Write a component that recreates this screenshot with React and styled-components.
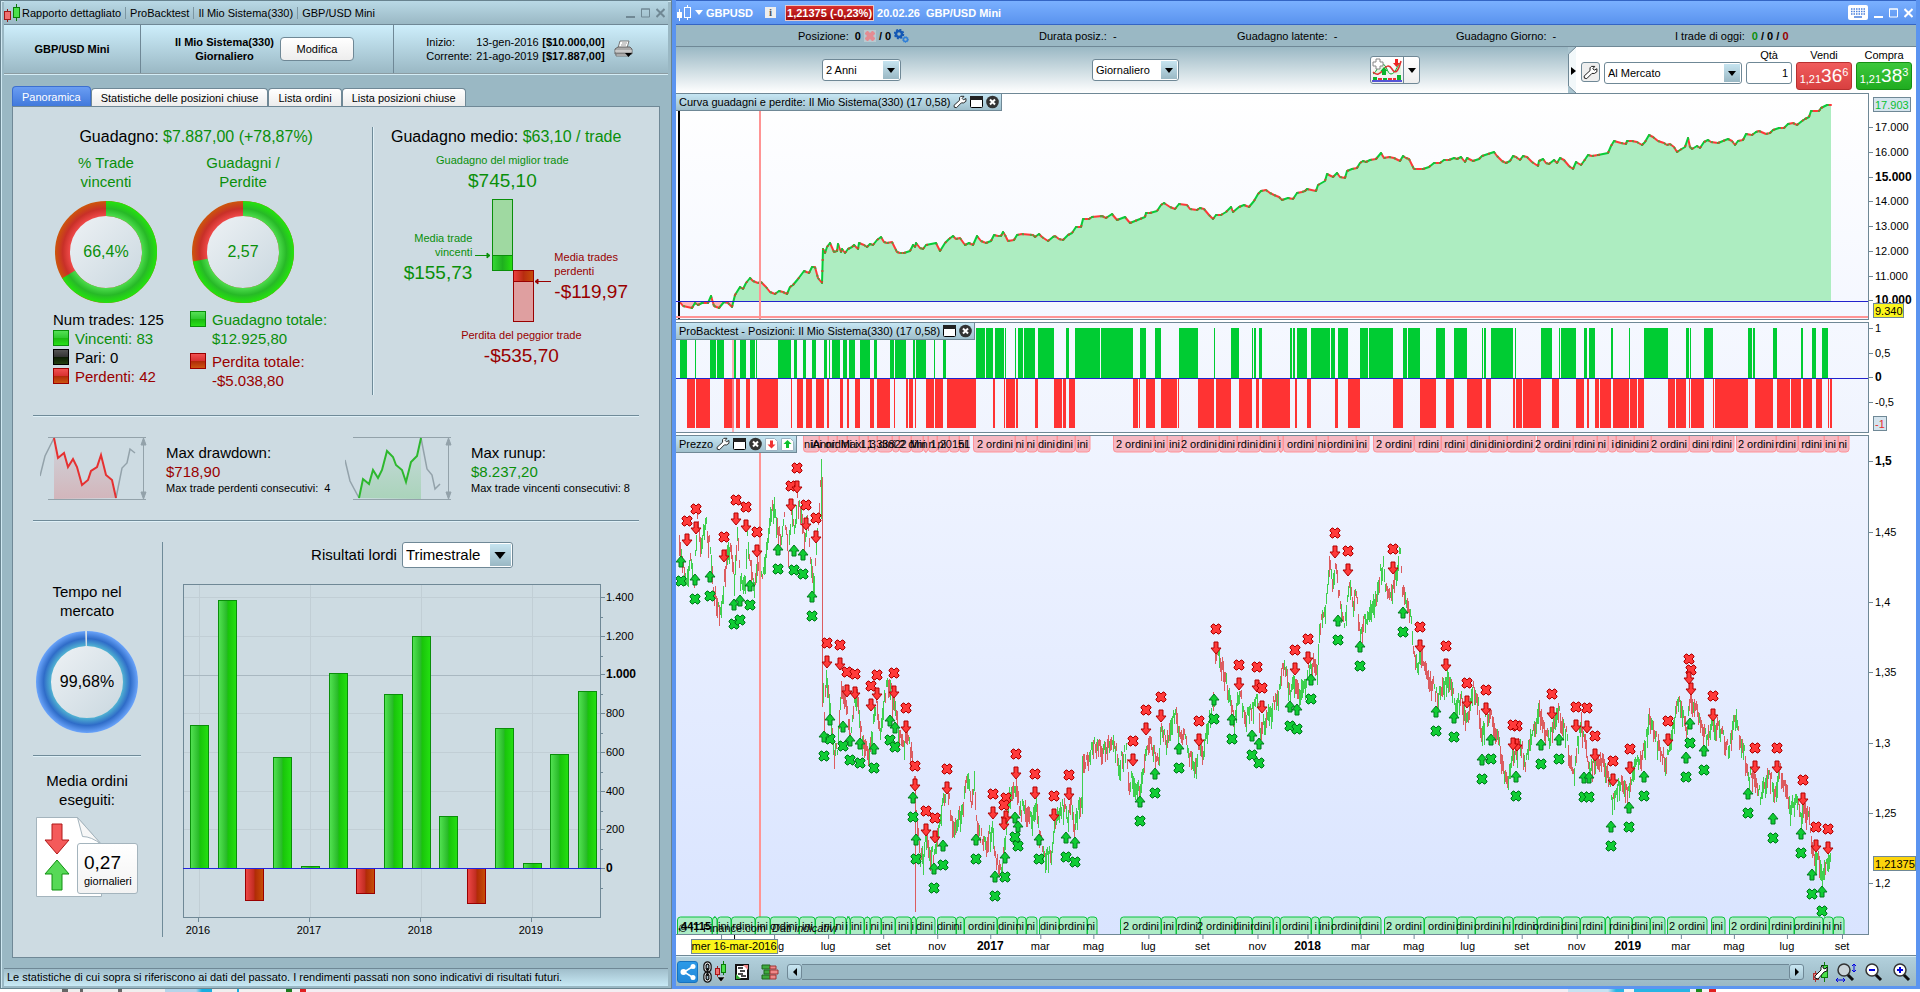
import React, { useState } from 'react';
import styled, { createGlobalStyle } from 'styled-components';

const GlobalStyle = createGlobalStyle`
  * { box-sizing: border-box; }
  body {
    margin: 0;
    background: #f4f4f4;
    color: #000;
    font: 11px/14px "Liberation Sans", Arial, sans-serif;
  }
  button, input, select { font: inherit; color: inherit; }
  svg { display: block; }
  svg text { font-family: "Liberation Sans", Arial, sans-serif; }
`;

const GREEN = '#0a8f0a';
const RED = '#990000';
const LINE = '#6f8896';

/* ---------- chart data ---------- */

// every series is sampled in two blocks, each with its own horizontal scale
const scale = (perPx, start) => (u) => Math.round(u / perPx + start);
const early = scale(2.45, -6);
const late = scale(2.45, 604);
const place = (fn, list) => list.map(([u, ...rest]) => [fn(u), ...rest]);
const placeRange = (fn, list) => list.map(([a, b, ...rest]) => [fn(a), fn(b), ...rest]);

const pairs = (text) => text.trim().split(/\s+/).map((p) => p.split(',').map(Number));

const EQUITY = [
  ...place(scale(2.613, -6), pairs(`
    24,634 34,648 58,655 66,638 72,645 84,640 98,640 108,618 116,648 128,655 140,636 152,638 162,650 170,614 182,592 190,598
    198,578 208,565 216,574 230,580 238,576 250,590 262,606 274,612 284,602 294,606 306,612 314,590 322,586 334,566 350,544
    362,548 370,530 380,530 388,564 396,578 400,478 404,490 410,470 418,458 428,487 436,484 440,462 446,486 450,478 456,488
    464,476 476,472 482,466 490,478 494,458 506,464 514,472 522,462 530,466 540,450 552,441 560,456 568,460 580,456 592,486
    600,488 612,490 628,484 636,464 640,472 644,458 652,475 660,476 670,464 696,460 706,482 718,460 730,446 740,438 748,446
    758,444 770,466 782,458 792,464 802,438 812,452 826,458 838,454 846,434 856,438 866,438 870,427 876,436 884,452 900,450
    908,434 920,432 948,434 954,442 964,432 972,440 988,452 1000,440 1006,438 1016,448 1028,450 1040,436 1050,428 1062,410
    1074,410 1080,388 1094,386 1102,380 1130,378 1138,385 1154,373 1168,390 1190,382 1202,398 1214,392 1228,388 1240,382
    1244,370 1254,370 1272,364 1282,344 1292,338 1306,350 1320,356 1330,342 1350,346 1360,356 1376,360 1384,354 1396,356
    1408,374 1420,388 1426,374 1440,376 1454,366 1466,352 1472,366 1488,352 1500,346 1512,350 1526,334 1536,312 1544,302
    1558,300`)),
  ...place(scale(2.412, 594), pairs(`
    0,308 10,316 22,320 30,330 44,324 56,326 64,308 76,306 84,304 90,296 110,302 116,286 132,274 138,252 152,260 162,248
    170,260 180,265 186,244 198,236 210,234 216,218 224,212 232,216 240,209 256,206 268,190 276,204 288,200 300,204 314,214
    320,198 328,204 336,208 348,236 370,238 384,232 396,220 410,218 420,211 432,209 444,203 450,207 460,200 470,215 476,203
    490,212 504,206 512,198 526,192 540,187 548,198 560,212 570,218 578,214 586,199 594,200 602,210 610,198 620,202 632,215
    646,228 650,214 658,206 666,218 674,222 684,210 692,218 700,204 708,210 722,228 732,236 738,216 750,224 758,214 766,194
    776,198 790,194 816,190 822,168 830,154 846,160 858,162 862,152 872,152 884,156 898,166 904,156 914,136 924,142 936,154
    950,158 958,164 964,162 974,172 982,186 990,180 1002,172 1008,144 1012,172 1018,178 1030,168 1036,174 1046,156 1056,150
    1064,157 1080,158 1092,154 1104,146 1114,152 1122,166 1130,154 1140,150 1148,132 1162,136 1172,126 1180,124 1196,132
    1206,130 1214,120 1228,114 1240,114 1250,102 1262,98 1272,104 1282,92 1290,88 1300,80 1306,64 1324,64 1330,54 1344,46
    1354,45`)),
].map(([x, y]) => [x, Math.round(y / 3) - 4]);

const LONGS = [
  ...placeRange(early, pairs(`
    24,42 61,64 98,113 115,132 158,162 171,186 196,208 211,213 265,296 304,311 326,333 348,358 377,385 389,393 397,416
    424,433 438,453 465,491 500,507 539,549 551,578 595,600 603,627 647,649 669,676 750,772 774,791 796,818 821,823 845,848
    853,865 867,894 902,941 970,978 992,1053 1056,1134 1151,1166 1188,1203 1247,1294 1332,1334 1374,1393 1426,1429
    1431,1436 1443,1450 1519,1524 1526,1531 1536,1561`)),
  ...placeRange(late, pairs(`
    76,122 125,135 142,167 196,216 218,277 301,311 314,343 382,404 426,458 495,497 500,505 517,571 575,577 639,666 684,686
    688,725 745,752 757,772 811,816 855,857 892,951 995,1002 1004,1007 1039,1061 1147,1156 1159,1164 1208,1218 1276,1281
    1303,1313 1328,1343`)),
];

const SHORTS = [
  ...placeRange(early, pairs(`
    42,61 64,98 132,158 162,171 186,196 213,265 296,300 311,326 333,348 358,377 385,389 416,424 433,438 453,465 491,500
    507,539 549,551 578,583 586,595 600,603 627,647 649,669 679,750 791,796 818,821 823,845 848,853 894,902 941,960 963,970
    978,992 1134,1147 1149,1151 1166,1188 1203,1242 1245,1247 1294,1332 1338,1374 1394,1426 1436,1443 1450,1519 1531,1536`)),
  ...placeRange(late, pairs(`
    66,76 135,142 167,196 277,301 343,382 407,426 458,495 505,517 571,576 578,593 595,639 666,684 725,745 752,757 772,782
    784,811 816,855 857,875 877,892 951,968 970,995 1002,1004 1007,1039 1061,1063 1066,1147 1164,1208 1218,1250 1252,1276
    1281,1303 1313,1328 1343,1345 1347,1352`)),
];

const upper = ([x, y]) => [x, Math.round(y / 3) - 136];
const lower = ([x, y]) => [x, Math.round(y / 3) + 184];

const SELLS = [
  ...place(early, pairs('42,664 64,627 162,601 187,622 133,712 213,697 297,559 312,505 334,616 358,653')).map(upper),
  ...place(early, pairs(`
    385,70 417,76 434,157 454,163 493,199 508,165 549,160 579,265 600,438 679,448 628,574 650,595 792,523 823,535 819,556
    848,402 895,463 942,529 978,466 1135,363 1167,271 1204,232 1295,304 1338,27 1395,136 1437,142 1451,205 1532,91
    1562,58`)).map(lower),
  ...place(late, pairs('135,700 167,754 278,748')).map(upper),
  ...place(late, pairs(`
    344,22 407,79 459,190 505,211 580,318 572,315 667,223 726,262 752,265 772,349 817,424 858,388 951,304 1008,151 1003,118
    1061,229 1164,385 1218,385 1282,481 1314,622 1343,628`)).map(lower),
];

const BUYS = [
  ...place(early, pairs('26,786 62,841 98,832 157,916 172,904 197,859 265,751 304,754 327,766 349,892')).map(upper),
  ...place(early, pairs(`
    391,299 378,352 425,322 440,362 466,373 501,388 540,302 552,325 596,535 603,661 647,748 670,677 750,661 797,772 821,715
    846,595 853,622 903,661 971,655 993,670 1152,547 1189,463 1248,388 1334,241 1376,301 1427,349 1444,373 1520,262
    1537,271`)).map(lower),
  ...place(late, pairs('143,964 302,940')).map(upper),
  ...place(late, pairs(`
    77,181 197,82 383,276 427,295 496,421 517,361 577,472 640,376 684,361 745,475 758,475 811,622 856,565 893,472 995,415
    1005,313 1040,394 1147,523 1209,598 1277,643 1304,766 1328,817`)).map(lower),
];

const PRICE = [
  ...place(early, pairs(`
    22,538 30,565 40,590 48,560 58,585 66,520 75,550 85,525 95,545 105,590 115,605 123,620 130,590 138,560 148,550 156,580
    164,535 172,585 184,580 188,545 198,570 205,590 214,560 222,585 230,570 245,520 256,508 264,535 272,545 280,525 288,555
    296,515 304,535 312,505 320,518 328,545 336,520 344,560 354,590 358,550 364,510 371,470 374,690 378,715 383,675 390,700
    400,755 410,755 418,690 426,700 434,715 440,740 450,705 458,700 468,740 486,760 495,735 505,705 515,735 525,700 533,685
    543,700 552,705 560,740 570,750 580,735 590,755 597,780 603,820 612,860 620,860 626,840 635,850 645,862 655,840 665,810
    678,790 686,815 695,835 705,820 715,815 722,785 730,785 738,805 745,785 750,825 760,840 772,850 780,840 790,830 797,860
    803,870 811,880 820,840 830,800 840,795 848,790 858,815 870,808 880,820 890,818 896,805 905,835 915,855 925,860 935,855
    942,830 950,815 965,808 972,825 980,805 990,830 1000,810 1010,805 1012,765 1025,765 1035,750 1050,752 1065,755 1078,742
    1090,750 1098,770 1108,762 1118,755 1125,790 1135,780 1145,795 1155,785 1170,745 1182,750 1195,765 1203,728 1215,745
    1228,730 1240,712 1248,740 1262,740 1270,760 1286,770 1295,745 1305,755 1315,730 1325,715 1332,700 1336,655 1344,660
    1352,670 1360,680 1370,700 1382,730 1390,705 1396,700 1410,720 1425,715 1437,705 1445,735 1460,720 1475,710 1490,700
    1500,668 1510,675 1520,695 1530,685 1540,695 1555,690 1560,675`)),
  ...place(late, pairs(`
    80,665 90,670 95,635 100,625 110,615 119,565 128,590 137,570 143,595 152,620 158,628 168,590 178,605 187,600 196,635
    206,625 215,620 225,605 235,600 245,575 252,570 258,595 268,600 275,590 285,575 294,555 300,590 308,605 318,615 326,650
    335,670 345,660 355,670 370,685 386,702 398,690 408,680 420,690 430,710 443,700 455,725 465,705 474,695 485,710 495,740
    505,715 520,725 535,740 548,775 556,785 565,765 572,755 580,755 588,745 600,765 610,745 622,730 634,710 645,730 660,745
    668,725 682,712 690,730 700,740 710,765 720,775 730,740 738,725 748,745 758,775 770,765 785,765 800,770 810,805 816,800
    825,790 840,785 852,795 862,780 872,765 885,760 895,750 905,715 915,730 930,755 945,765 958,740 966,725 975,700 985,715
    997,735 1003,705 1015,710 1030,720 1042,740 1052,735 1062,730 1075,730 1088,745 1098,755 1108,730 1116,720 1125,740
    1135,750 1148,785 1157,775 1164,782 1175,800 1190,780 1203,785 1212,800 1222,775 1235,785 1250,810 1265,805 1275,820
    1284,808 1295,820 1302,845 1310,865 1318,860 1328,875 1340,868 1350,860`)),
].map(([x, y]) => [x, y - 436]);

// one thin high/low bar per session between the turning points
const buildBars = (points) => {
  let seed = 7;
  const rand = () => {
    seed = (seed * 16807) % 2147483647;
    return seed / 2147483647;
  };
  const bars = { up: '', down: '' };
  for (let i = 1; i < points.length; i += 1) {
    const [x0, y0] = points[i - 1];
    const [x1, y1] = points[i];
    for (let x = x0; x < x1; x += 1) {
      const y = y0 + ((y1 - y0) * (x - x0)) / (x1 - x0);
      const top = Math.round(y - 3 - rand() * 11);
      const size = Math.round(5 + rand() * 17);
      const rising = y1 < y0 ? rand() > 0.22 : rand() > 0.72;
      bars[rising ? 'up' : 'down'] += `M${x + 0.5} ${top}v${size}`;
    }
  }
  return bars;
};
const BARS = buildBars(PRICE);

const tags = (fn, text) =>
  text.trim().split('|').map((t) => {
    const [a, b, n = ''] = t.trim().split(',');
    return [fn(Number(a)), fn(Number(b)), n];
  });

const SELL_TAGS = [
  ...tags(early, `
    326,364,|364,388,|388,410,|410,433,|433,463,|463,486,|486,508,|508,545,|545,561,|561,590,|590,620,|620,633,|633,655,|
    655,683,|683,707,|707,733,ni|743,845,2 ordini|845,871,ni|871,900,ni|900,947,dini|947,993,dini|
    993,1030,ini|1086,1186,2 ordini|1186,1218,ini|1218,1255,ini|1255,1345,2 ordini|1345,1390,dini|1390,1446,rdini|
    1446,1490,dini|1490,1502,i|1502,1583,ordini`),
  ...tags(late, `
    89,118,ni|118,187,ordini|187,218,ini|229,329,2 ordini|329,395,rdini|395,459,rdini|459,511,dini|511,557,dini|
    557,624,ordini|630,718,2 ordini|718,777,rdini|777,804,ni|804,823,i|823,868,dini|868,910,dini|910,1003,2 ordini|
    1003,1055,dini|1058,1112,rdini|1116,1216,2 ordini|1216,1270,rdini|1270,1333,rdini|1333,1367,ini|1367,1395,ni`),
];

const BUY_TAGS = [
  ...tags(early, `
    17,102,|102,114,|114,150,ini|150,209,rdini|209,245,ini|245,316,ordini|316,355,ini|355,402,ini|402,430,ni|430,442,i|
    442,476,ini|476,490,i|490,518,ni|518,551,ini|551,591,ini|591,603,i|603,649,dini|654,700,dini|700,721,ni|721,802,ordini|
    802,849,dini|849,873,ni|873,898,ni|905,953,dini|953,1022,ordini|1022,1045,ni|1103,1204,2 ordini|1204,1240,ini|
    1240,1299,rdini|1299,1385,2 ordini|1385,1427,dini|1427,1478,rdini|1478,1495,i|1495,1571,ordini`),
  ...tags(late, `
    77,95,i|95,127,ini|127,195,ordini|195,248,rdini|254,353,2 ordini|353,434,ordini|434,478,dini|478,546,ordini|546,570,ni|
    570,629,rdini|629,692,ordini|692,736,dini|736,797,rdini|797,809,|809,863,rdini|863,907,dini|907,944,ini|
    948,1047,2 ordini|1055,1091,ini|1099,1199,2 ordini|1199,1260,rdini|1260,1330,ordini|1330,1355,ni|1355,1381,ni`),
];

const MONTHS = [
  ...place(early, [
    [125, ''], [256, ''], [388, 'lug'], [523, 'set'], [653, 'nov'], [783, '2017'], [907, 'mar'], [1037, 'mag'],
    [1172, 'lug'], [1304, 'set'], [1437, 'nov'],
  ]),
  ...place(late, [
    [67, '2018'], [195, 'mar'], [327, 'mag'], [457, 'lug'], [591, 'set'], [724, 'nov'], [851, '2019'], [979, 'mar'],
    [1109, 'mag'], [1239, 'lug'], [1374, 'set'],
  ]),
];

// x, top, bottom of each quarter
const QUARTERS = [
  [7, 142, 285], [35, 17, 285], [62, 285, 317], [90, 174, 285], [118, 283, 285], [146, 90, 285], [173, 285, 310],
  [201, 111, 285], [229, 53, 285], [256, 233, 285], [284, 285, 320], [312, 145, 285], [340, 280, 285], [367, 171, 285],
  [395, 108, 285],
];

/* ---------- icons ---------- */

const CandlesIcon = () => (
  <svg width="16" height="20" viewBox="0 0 16 20">
    <path d="M3.500 6v13" stroke="#8c1a1a" />
    <rect x="0.500" y="8.500" width="6" height="8" fill="#f07070" stroke="#a01818" />
    <path d="M12.500 1v17" stroke="#0b7a0b" />
    <rect x="9.500" y="4.500" width="6" height="10" fill="#4be04b" stroke="#0b7a0b" />
  </svg>
);

const WhiteCandlesIcon = () => (
  <svg width="16" height="18" viewBox="0 0 16 18">
    <path d="M3.500 5v12M11.500 1v15" stroke="#fff" />
    <rect x="1" y="8" width="5" height="6" fill="#fff" />
    <rect x="8.500" y="3.500" width="6" height="10" fill="#6ba2f6" stroke="#fff" />
  </svg>
);

const WrenchIcon = ({ size = 14 }) => (
  <svg width={size} height={size} viewBox="0 0 16 16">
    <path
      d="M9 1.500h3.500l-2 2.500 1.500 1.500 2.800-1.500v3.200l-2.600 1.800H9.500L4 14.500 1.500 14 1.200 11.800 7.500 6V3z"
      fill="#fff" stroke="#111" strokeLinejoin="round"
    />
  </svg>
);

const PaneIcon = () => (
  <svg width="13" height="14" viewBox="0 0 13 14">
    <rect x="0.500" y="1.500" width="12" height="11" rx="1" fill="#fff" stroke="#000" />
    <path d="M0 1h13v4H0z" fill="#222" />
  </svg>
);

const CloseIcon = () => (
  <svg width="13" height="14" viewBox="0 0 13 14">
    <circle cx="6.500" cy="7" r="6.300" fill="#333" />
    <path d="M4 4.500l5 5M9 4.500l-5 5" stroke="#fff" strokeWidth="2" />
  </svg>
);

const OrderIcon = ({ up }) => (
  <svg width="13" height="14" viewBox="0 0 13 14">
    <path d="M0.500 1.500h9l3 3v9h-12z" fill="#fff" stroke="#9db4c4" />
    {up
      ? <path d="M6.500 3l4 4H8v4H5V7H2.500z" fill="#0cc22c" />
      : <path d="M6.500 11.500l4-4H8v-4H5v4H2.500z" fill="#f03434" />}
  </svg>
);

const PrinterIcon = () => (
  <svg width="19" height="18" viewBox="0 0 19 18">
    <path d="M6 1h9l-2 7H4z" fill="#fff" stroke="#777" />
    <path d="M8 3h5M7 5h5" stroke="#999" />
    <path d="M1 9l3-2h12l2 2v5H1z" fill="#a9a9a9" stroke="#666" />
    <path d="M1 11h17" stroke="#e8e8e8" />
    <path d="M2 14h13v2H2z" fill="#ddd" stroke="#777" />
    <path d="M11 13h7l-3.500 4z" fill="#000" />
  </svg>
);

const GearsIcon = () => (
  <svg width="15" height="14" viewBox="0 0 15 14">
    <circle cx="5" cy="5" r="3" fill="none" stroke="#1559b5" strokeWidth="2.500" />
    <circle cx="5" cy="5" r="4.500" fill="none" stroke="#1559b5" strokeWidth="1.500" strokeDasharray="2 1.500" />
    <circle cx="11.500" cy="10.500" r="2" fill="none" stroke="#2f7fd8" strokeWidth="1.500" />
    <circle cx="11.500" cy="10.500" r="3" fill="none" stroke="#2f7fd8" strokeDasharray="1 1" />
  </svg>
);

const KeyboardIcon = () => (
  <svg width="20" height="15" viewBox="0 0 20 15">
    <rect width="20" height="15" rx="2" fill="#fff" />
    <path d="M3 4h14M3 6.500h14M3 9h14" stroke="#4a80dc" strokeWidth="1.500" strokeDasharray="1.500 1" />
    <path d="M6 12h8" stroke="#4a80dc" strokeWidth="1.500" />
  </svg>
);

const IndicatorIcon = () => (
  <svg width="32" height="24" viewBox="0 0 32 24">
    <path d="M2 16c4-2 5-10 9-10s5 10 9 10 5-12 10-12v12z" fill="#dff5df" />
    <path d="M2 16c4-2 5-10 9-10 5 0 5 10 9 10s6-8 10-12" fill="none" stroke="#0aa82a" />
    <path d="M2 14c4 4 7 2 10-2s6-6 9-1 6 4 9-8" fill="none" stroke="#e03030" strokeWidth="1.500" />
    <path d="M5 1h4v3h3v4H9v3H5V8H2V4h3z" fill="#fff" stroke="#888" />
    <path d="M24 1h3v4h2l-3.500 4L22 5h2z" fill="#ee2222" />
    <path d="M13 9l3.500 4H15v4h-4v-4H9.500z" fill="#0cb52c" />
    <path d="M2 19h4v3H2zM12 20h4v2h-4zM26 17h4v5h-4z" fill="#0cb52c" />
    <path d="M7 20h4v2H7zM17 20h4v2h-4zM22 20h3v2h-3z" fill="#e33" />
    <path d="M1 23h30" stroke="#2222cc" strokeWidth="1.500" />
  </svg>
);

const ShareIcon = () => (
  <svg width="16" height="18" viewBox="0 0 16 18">
    <path d="M13 3.500L4 9l9 5.500" fill="none" stroke="#fff" strokeWidth="1.500" />
    <circle cx="13" cy="3.500" r="2.500" fill="#fff" />
    <circle cx="3.500" cy="9" r="3" fill="#fff" />
    <circle cx="13" cy="14.500" r="2.500" fill="#fff" />
  </svg>
);

const ChainIcon = () => (
  <svg width="24" height="22" viewBox="0 0 24 22">
    <g fill="none" stroke="#111" strokeWidth="3.500">
      <rect x="2" y="2" width="5" height="8" rx="2.500" />
      <rect x="2" y="12" width="5" height="8" rx="2.500" />
    </g>
    <g fill="none" stroke="#fff">
      <rect x="2" y="2" width="5" height="8" rx="2.500" />
      <rect x="2" y="12" width="5" height="8" rx="2.500" />
    </g>
    <path d="M4.500 7v8" stroke="#111" strokeWidth="2" />
    <path d="M14.500 5v11" stroke="#a01818" />
    <rect x="12.500" y="7.500" width="4" height="6" fill="#f07070" stroke="#a01818" />
    <path d="M20.500 0v14" stroke="#0b7a0b" />
    <rect x="18.500" y="3.500" width="4" height="8" fill="#4be04b" stroke="#0b7a0b" />
    <path d="M14 16h8l-4 5z" fill="#000" stroke="#fff" strokeWidth="0.500" />
  </svg>
);

const NotesIcon = () => (
  <svg width="14" height="16" viewBox="0 0 14 16">
    <rect x="1" y="1" width="12" height="14" fill="#fff" stroke="#111" strokeWidth="2" />
    <path d="M3 4h5M5 7h5M3 10h5M6 12h5" stroke="#111" strokeWidth="1.500" />
    <path d="M8 1h5v5z" fill="#e88" />
    <path d="M1 10l5 5H1z" fill="#3a3" />
  </svg>
);

const DepthIcon = () => (
  <svg width="18" height="16" viewBox="0 0 18 16">
    <path d="M1 1h8v4H1zM3 6h6v4H3zM1 11h8v4H1z" fill="#3faa3f" stroke="#1c661c" />
    <path d="M9 2h6v3H9zM9 6h8v4H9zM9 11h6v4H9z" fill="#f08888" stroke="#9c3434" />
  </svg>
);

const ChartToolsIcon = () => (
  <svg width="16" height="20" viewBox="0 0 16 20">
    <path d="M3.500 9v11" stroke="#a33" />
    <rect x="1.500" y="11.500" width="5" height="6" fill="#e77" stroke="#a33" />
    <path d="M12.500 0v20" stroke="#0b7a0b" />
    <rect x="9.500" y="3.500" width="6" height="12" fill="#4be04b" stroke="#0b7a0b" />
    <path d="M9 5l2-2v3l2 1 2-2v4l-3 1-6 7-3-1 0-2 6-6z" fill="#fff" stroke="#111" />
  </svg>
);

const MagnifierIcon = ({ sign }) => (
  <svg width="20" height="20" viewBox="0 0 20 20">
    <path d="M11 12l6 6" stroke="#111" strokeWidth="3" />
    <circle cx="8" cy="8" r="6" fill={sign ? '#fff' : '#c9d3d8'} stroke="#333" strokeWidth="1.500" />
    {sign && <path d={sign === '+' ? 'M5 8h6M8 5v6' : 'M5 8h6'} stroke="#0000e0" strokeWidth="2" />}
    {!sign && (
      <path d="M18 2v8M16 4l2-2 2 2M16 8l2 2 2-2M0 18h9M2 16l-2 2 2 2M7 16l2 2-2 2" stroke="#0000e0" fill="none" />
    )}
  </svg>
);

/* ---------- shared parts ---------- */

const Desktop = styled.main`
  min-height: 100vh;
  display: flex;
  flex-direction: column;
`;

const Windows = styled.div`
  flex: 1;
  display: grid;
  grid-template-columns: 35% 1fr;
`;

const BackWindow = styled.div`
  height: 3px;
  background: linear-gradient(
    90deg, #fff 50px, #efefef 50px 62px, #666 62px 68px, #efefef 68px 80px, #666 80px 83px, #efefef 83px 118px,
    #666 118px 122px, #efefef 122px 165px, #b5d5ea 165px 196px, #19aee0 202px 212px, #efefef 212px 237px,
    #19aee0 237px 239px, #f2f2f2 239px 286px, #1d7a1d 286px 292px, #f2f2f2 292px 300px, #e02020 300px 306px,
    #f3eef3 306px 1568px, #c6e2f2 1568px 1608px, #28b4e4 1616px 1624px, #f4f4f4 1624px 1634px, #28b4e4 1634px 1690px,
    #f4f4f4 1690px 1696px, #1d8a1d 1696px 1702px, #f4f4f4 1702px 1709px, #e02020 1709px 1716px, #fff 1716px
  );
`;

const WindowControls = styled.div`
  margin-left: auto;
  display: flex;
  align-items: center;
  gap: 6px;
`;

const IconButton = styled.button`
  display: grid;
  place-items: center;
  padding: 0;
  border: 0;
  background: none;
`;

const Controls = ({ color }) => (
  <>
    <IconButton aria-label="Riduci">
      <svg width="9" height="10" viewBox="0 0 9 10"><path d="M0 9h9" stroke={color} strokeWidth="2" /></svg>
    </IconButton>
    <IconButton aria-label="Ingrandisci">
      <svg width="9" height="10" viewBox="0 0 9 10"><path d="M0.500 1h8v8h-8zM0 1h9" fill="none" stroke={color} /></svg>
    </IconButton>
    <IconButton aria-label="Chiudi">
      <svg width="9" height="10" viewBox="0 0 9 10"><path d="M0.500 1l8 8M8.500 1l-8 8" stroke={color} strokeWidth="2" /></svg>
    </IconButton>
  </>
);

const SelectBox = styled.div`
  position: relative;
  width: ${(p) => p.$width};
`;

const NativeSelect = styled.select`
  appearance: none;
  display: block;
  width: 100%;
  height: ${(p) => (p.$large ? 26 : 22)}px;
  padding: 0 0 0 3px;
  border: 1px solid ${LINE};
  border-radius: 3px;
  background: #fff;
  font-size: ${(p) => (p.$large ? 15 : 11)}px;
`;

const SelectArrow = styled.span`
  position: absolute;
  top: 2px;
  right: 2px;
  bottom: 2px;
  width: ${(p) => (p.$large ? 21 : 16)}px;
  display: grid;
  place-items: center;
  background: linear-gradient(#c6e4f0, #9ab8c4);
  pointer-events: none;
`;

const Select = ({ large, width, label, id, options }) => {
  const [value, setValue] = useState(options[0]);
  return (
    <SelectBox $width={width}>
      <NativeSelect id={id} aria-label={label} $large={large} value={value} onChange={(e) => setValue(e.target.value)}>
        {options.map((o) => <option key={o}>{o}</option>)}
      </NativeSelect>
      <SelectArrow $large={large}>
        <svg width={large ? 12 : 8} height={large ? 7 : 5} viewBox="0 0 8 5"><path d="M0 0h8L4 5z" /></svg>
      </SelectArrow>
    </SelectBox>
  );
};

/* ---------- report window ---------- */

const Report = styled.section`
  display: flex;
  flex-direction: column;
  min-width: 0;
  padding: 0 3px 2px;
  border: 1px solid #68838f;
  background: #9ab8c4;
  box-shadow: inset 1px 1px #cfe8f2;
`;

const ReportTitle = styled.header`
  display: flex;
  align-items: center;
  height: 24px;
  padding-right: 3px;
  border-bottom: 1px solid ${LINE};
  background: linear-gradient(#b9d9e6, #9ab8c4);

  span { padding: 0 4px; border-left: 1px solid #7c96a2; line-height: 12px; }
  span:first-of-type { padding-left: 2px; border: 0; }
`;

const Summary = styled.div`
  display: grid;
  grid-template-columns: 136fr 253fr 275fr;
  height: 50px;
  border-bottom: 2px groove #d5edf6;
  background: linear-gradient(#cdeefb, #9ab8c4);
`;

const SummaryCell = styled.div`
  display: flex;
  align-items: center;
  justify-content: center;
  gap: 6px;
  padding-right: ${(p) => p.$shift || 0}px;
  text-align: center;
  font-weight: ${(p) => (p.$plain ? 400 : 700)};
  & + & { border-left: 1px solid ${LINE}; }
`;

const Modify = styled.button`
  height: 24px;
  width: 74px;
  border: 1px solid ${LINE};
  border-radius: 4px;
  background: linear-gradient(#fff, #ededed);
  font-weight: 400;
`;

const Dates = styled.dl`
  display: grid;
  grid-template-columns: 50px 63px auto;
  margin: 0 3px 0 0;
  text-align: left;
  dt, dd { margin: 0; white-space: nowrap; }
`;

const Tabs = styled.div`
  display: flex;
  align-items: flex-end;
  height: 20px;
  margin: 11px 8px 0;
`;

const Tab = styled.button`
  height: ${(p) => (p.$active ? 20 : 18)}px;
  padding: 0 9px;
  border: 1px solid ${(p) => (p.$active ? '#3c6fd0' : LINE)};
  border-bottom: 0;
  border-radius: 4px 4px 0 0;
  background: ${(p) => (p.$active ? 'linear-gradient(#6a9df2, #4179dc)' : 'linear-gradient(#fff, #ececec)')};
  color: ${(p) => (p.$active ? '#fff' : '#000')};
  white-space: nowrap;
`;

const TabPanel = styled.div`
  flex: 1;
  display: flex;
  flex-direction: column;
  margin: 0 8px 10px;
  padding: 20px;
  border: 1px solid ${LINE};
  background: #cddbe2;
`;

const Status = styled.footer`
  height: 18px;
  padding: 1px 3px;
  border-top: 1px solid ${LINE};
  background: linear-gradient(#a0becb, #c8e9f5);
`;

const Rule = styled.hr`
  width: 100%;
  height: 2px;
  margin: ${(p) => (p.$short ? '22px 0 14px' : 0)};
  border: 0;
  background: linear-gradient(#6f8b99 50%, #dff0f7 50%);
  flex: none;
`;

const Performance = styled.div`
  display: grid;
  grid-template-columns: minmax(0, 56fr) minmax(0, 44fr);
  height: 268px;
  margin-bottom: 20px;
`;

const Half = styled.div`
  white-space: nowrap;
  & + & { border-left: 1px solid #6f8b99; box-shadow: inset 1px 0 #dff0f7; }
`;

const Heading = styled.h2`
  margin: 0 ${(p) => (p.$wide ? 0 : 13)}px 7px 0;
  text-align: center;
  font-size: 16px;
  font-weight: 400;
  line-height: 19px;
`;

const Tone = styled.span`
  color: ${(p) => (p.$loss ? RED : GREEN)};
`;

const Rings = styled.div`
  display: grid;
  grid-template-columns: 106px 106px;
  column-gap: 31px;
  justify-items: center;
  padding-left: 20px;
`;

const RingTitle = styled.div`
  margin-bottom: ${(p) => (p.$wide ? 11 : 10)}px;
  text-align: center;
  font-size: 15px;
  line-height: 19px;
  color: ${(p) => (p.$plain ? '#000' : GREEN)};
`;

const Legends = styled.div`
  display: grid;
  grid-template-columns: 137px 1fr;
  margin-top: 7px;
  padding-left: 20px;
  font-size: 15px;
  line-height: 19px;
`;

const LegendRow = styled.div`
  display: flex;
  gap: 6px;
  margin-top: ${(p) => (p.$apart ? 4 : 0)}px;
  color: ${(p) => ({ win: GREEN, loss: RED }[p.$kind] || '#000')};
`;

const Swatch = styled.i`
  flex: none;
  width: 16px;
  height: 16px;
  margin-top: 1px;
  border: 1px solid ${(p) => ({ win: GREEN, loss: RED, even: '#000' }[p.$kind])};
  background: ${(p) => ({
    win: 'linear-gradient(#55e055, #2fc82f 50%, #1cba10 52%, #28e018)',
    loss: 'linear-gradient(#f05050, #d83030 50%, #b02a08 52%, #cc5510)',
    even: 'linear-gradient(#555, #333 50%, #0c1c04 52%, #244010)',
  }[p.$kind])};
`;

const Small = styled.div`
  font-size: 11px;
  line-height: 14px;
`;

const Amount = styled.div`
  margin-top: 3px;
  font-size: 19px;
  line-height: 22px;
`;

const Extreme = styled.div`
  width: ${(p) => (p.$loss ? 296 : 258)}px;
  text-align: center;
  color: ${(p) => (p.$loss ? RED : GREEN)};
`;

const Diagram = styled.div`
  display: grid;
  grid-template-columns: 99px 76px 1fr;
  column-gap: 3px;
  margin: 7px 0 6px;
`;

const Average = styled.div`
  padding-top: ${(p) => (p.$loss ? 51 : 32)}px;
  text-align: ${(p) => (p.$loss ? 'left' : 'right')};
  color: ${(p) => (p.$loss ? RED : GREEN)};
`;

const Extremes = styled.div`
  display: grid;
  grid-template-columns: 305fr 294fr;
  align-items: center;
  height: 103px;
  padding-left: 7px;
`;

const Swing = styled.div`
  display: flex;
  align-items: center;
  gap: 19px;
  font-size: 15px;
  line-height: 19px;
  white-space: nowrap;
`;

const Activity = styled.div`
  flex: 1;
  display: grid;
  grid-template-columns: 130px 1fr;
  margin-top: 20px;
`;

const Market = styled.div`
  display: flex;
  flex-direction: column;
  align-items: center;
  padding: 40px 21px 0 0;
  border-right: 1px solid #6f8b99;
`;

const Orders = styled.div`
  position: relative;
  align-self: flex-start;
  width: 105px;
  height: 80px;
  margin: -2px 0 0 3px;
`;

const OrdersCard = styled.div`
  position: absolute;
  left: 41px;
  top: 26px;
  width: 61px;
  height: 51px;
  padding: 5px 6px;
  border: 1px solid #a4b4bd;
  border-radius: 3px;
  background: linear-gradient(#fff, #f3f3f3);
`;

const Gross = styled.div`
  min-width: 0;
  padding-left: 20px;
`;

const GrossHead = styled.div`
  display: flex;
  align-items: center;
  justify-content: center;
  gap: 5px;
  margin-bottom: 15px;
  padding-left: 2px;
  font-size: 15px;
`;

const Ring = ({ id, share, text, blue }) => (
  <svg width="102" height="102" viewBox="0 0 102 102">
    <defs>
      <radialGradient id={`${id}-a`} gradientUnits="userSpaceOnUse" cx="51" cy="51" r="51">
        <stop offset="0.710" stopColor={blue ? '#4fb0d2' : '#4cdc4c'} />
        <stop offset="0.850" stopColor={blue ? '#2f6cc8' : '#27b927'} />
        <stop offset="1" stopColor={blue ? '#6aa4fa' : '#24e40e'} />
      </radialGradient>
      <radialGradient id={`${id}-b`} gradientUnits="userSpaceOnUse" cx="51" cy="51" r="51">
        <stop offset="0.710" stopColor="#ee4848" />
        <stop offset="0.850" stopColor="#c83028" />
        <stop offset="1" stopColor="#cc560c" />
      </radialGradient>
      <linearGradient id={`${id}-c`} x2="1" y2="1">
        <stop offset="0" stopColor="#eef2f5" />
        <stop offset="1" stopColor="#c9d7df" />
      </linearGradient>
    </defs>
    <circle cx="51" cy="51" r="37" fill={`url(#${id}-c)`} />
    <g fill="none" strokeWidth="15" transform="rotate(-90 51 51)">
      <circle cx="51" cy="51" r="43.500" stroke={blue ? '#d5e0e8' : `url(#${id}-b)`} />
      <circle cx="51" cy="51" r="43.500" stroke={`url(#${id}-a)`} pathLength="100" strokeDasharray={`${share} 100`} />
    </g>
    <text x="51" y="56" textAnchor="middle" fontSize="16" fill={blue ? '#000' : GREEN}>{text}</text>
  </svg>
);

const TradeBars = () => (
  <svg width="76" height="123" viewBox="0 0 76 123">
    <defs>
      <linearGradient id="gainFill"><stop stopColor="#35d835" /><stop offset="0.500" stopColor="#1faf1f" /><stop offset="1" stopColor="#28e010" /></linearGradient>
      <linearGradient id="lossFill"><stop stopColor="#ee4040" /><stop offset="0.500" stopColor="#b82c10" /><stop offset="1" stopColor="#c65008" /></linearGradient>
    </defs>
    <rect x="17.500" y="0.500" width="20" height="56" fill="#9fd9a1" stroke={GREEN} />
    <rect x="17.500" y="56.500" width="20" height="15" fill="url(#gainFill)" stroke={GREEN} />
    <rect x="38.500" y="71.500" width="20" height="11" fill="url(#lossFill)" stroke={RED} />
    <rect x="38.500" y="82.500" width="20" height="40" fill="#df9fa0" stroke={RED} />
    <path d="M0 56.500h15M12 54l3 2.500-3 2.500z" fill={GREEN} stroke={GREEN} />
    <path d="M60 82.500h16M63 80l-3 2.500 3 2.500z" fill={RED} stroke={RED} />
  </svg>
);

const SwingIcon = ({ up }) => {
  const line = up
    ? '14,61 18,42 24,47 28,33 33,41 37,33 42,14 48,20 51,28 57,33 61,45 66,25 72,19 76,1'
    : '14,1 18,21 24,16 28,30 33,22 37,30 42,48 48,43 51,34 57,30 61,18 66,38 72,43 76,61';
  const color = up ? '#2db82d' : '#e63030';
  return (
    <svg width="107" height="63" viewBox="0 0 107 63">
      <defs>
        <linearGradient id={up ? 'upFade' : 'downFade'} x2="0" y2="1">
          <stop stopColor={color} stopOpacity="0.030" />
          <stop offset="1" stopColor={color} stopOpacity="0.220" />
        </linearGradient>
      </defs>
      <path d="M8 0.500h98M8 62.500h98" stroke="#93a2aa" />
      <polygon points={up ? `${line} 76,62` : `14,62 ${line}`} fill={`url(#${up ? 'upFade' : 'downFade'})`} />
      <polyline points={up ? '0,23 5,44 14,61' : '0,39 5,19 14,1'} fill="none" stroke="#93a2aa" strokeWidth="1.500" />
      <polyline points={up ? '76,1 82,32 87,38 90,52 95,47' : '76,61 82,31 87,26 90,12 95,16'} fill="none" stroke="#93a2aa" strokeWidth="1.500" />
      <polyline points={line} fill="none" stroke={color} strokeWidth="2" />
      <path d="M103.500 2v59M101 8l2.500-7 2.500 7zM101 55l2.500 7 2.500-7z" stroke="#93a2aa" fill="#93a2aa" />
    </svg>
  );
};

const OrdersIcon = () => (
  <svg width="66" height="80" viewBox="0 0 66 80">
    <path d="M0.500 0.500h41l24 27v52h-65z" fill="#fff" stroke="#a4b4bd" />
    <path d="M41.500 0.500l5 19q9 0 19 8z" fill="#f7f7f7" stroke="#a4b4bd" />
    <path d="M16 7h10v16h7L21 37 9 23h7z" fill="#f45a5a" stroke="#b01818" />
    <path d="M16 73V57H9l12-14 12 14h-7v16z" fill="#57d957" stroke="#119011" />
  </svg>
);

const QuarterChart = () => (
  <svg width="100%" viewBox="0 0 456 354">
    <defs>
      <linearGradient id="barUp"><stop stopColor="#53e353" /><stop offset="0.480" stopColor="#27b927" /><stop offset="0.520" stopColor="#18c40a" /><stop offset="1" stopColor="#25e012" /></linearGradient>
      <linearGradient id="barDown"><stop stopColor="#f04848" /><stop offset="0.480" stopColor="#c02c20" /><stop offset="0.520" stopColor="#b02a06" /><stop offset="1" stopColor="#c85008" /></linearGradient>
    </defs>
    <path d="M16.500 1v333M127.500 1v333M238.500 1v333M349.500 1v333M0 14.500h418M0 53.500h418M0 130.500h418M0 169.500h418M0 208.500h418M0 246.500h418" stroke="#c1ced5" />
    <path d="M0 92.500h418" stroke="#a9b8c1" />
    <rect x="0.500" y="1.500" width="417" height="333" fill="none" stroke="#6f8896" />
    {QUARTERS.map(([x, top, bottom]) => (
      <rect
        key={x} x={x + 0.5} y={top + 0.5} width="18" height={bottom - top}
        fill={top < 285 ? 'url(#barUp)' : 'url(#barDown)'} stroke={top < 285 ? GREEN : RED}
      />
    ))}
    <path d="M0 285.500h418" stroke="#2222dd" />
    {['1.400', '1.200', '1.000', '800', '600', '400', '200', '0'].map((t, i) => {
      const y = 14 + Math.round(i * 38.7);
      const bold = t === '1.000' || t === '0';
      return (
        <g key={t}>
          <path d={`M418 ${y + 0.5}h4M418 ${y + 20.5}h2`} stroke="#6f8896" />
          <text x="423" y={y + 4} fontSize={bold ? 12 : 11} fontWeight={bold ? 700 : 400}>{t}</text>
        </g>
      );
    })}
    {['2016', '2017', '2018', '2019'].map((t, i) => (
      <g key={t}>
        <path d={`M${15.5 + i * 111} 335v4`} stroke="#6f8896" />
        <text x={15 + i * 111} y="351" fontSize="11" textAnchor="middle">{t}</text>
      </g>
    ))}
  </svg>
);

const ReportWindow = () => {
  const [tab, setTab] = useState(0);
  return (
    <Report>
      <ReportTitle>
        <CandlesIcon />
        <span>Rapporto dettagliato</span><span>ProBacktest</span><span>Il Mio Sistema(330)</span><span>GBP/USD Mini</span>
        <WindowControls><Controls color="#708894" /></WindowControls>
      </ReportTitle>
      <Summary>
        <SummaryCell>GBP/USD Mini</SummaryCell>
        <SummaryCell $shift={5}>
          <div>Il Mio Sistema(330)<br />Giornaliero</div>
          <Modify>Modifica</Modify>
        </SummaryCell>
        <SummaryCell $plain $shift={3}>
          <Dates>
            <dt>Inizio:</dt><dd>13-gen-2016</dd><dd><b>&nbsp;[$10.000,00]</b></dd>
            <dt>Corrente:</dt><dd>21-ago-2019</dd><dd><b>&nbsp;[$17.887,00]</b></dd>
          </Dates>
          <IconButton aria-label="Stampa"><PrinterIcon /></IconButton>
        </SummaryCell>
      </Summary>
      <Tabs role="tablist">
        {['Panoramica', 'Statistiche delle posizioni chiuse', 'Lista ordini', 'Lista posizioni chiuse'].map((t, i) => (
          <Tab key={t} role="tab" aria-selected={tab === i} $active={tab === i} onClick={() => setTab(i)}>{t}</Tab>
        ))}
      </Tabs>
      <TabPanel role="tabpanel">
        <Performance>
          <Half>
            <Heading>Guadagno: <Tone>$7.887,00 (+78,87%)</Tone></Heading>
            <Rings>
              <RingTitle>% Trade<br />vincenti</RingTitle>
              <RingTitle>Guadagni /<br />Perdite</RingTitle>
              <Ring id="winners" share={66.4} text="66,4%" />
              <Ring id="ratio" share={72} text="2,57" />
            </Rings>
            <Legends>
              <div>
                <LegendRow>Num trades: 125</LegendRow>
                <LegendRow $kind="win"><Swatch $kind="win" />Vincenti: 83</LegendRow>
                <LegendRow><Swatch $kind="even" />Pari: 0</LegendRow>
                <LegendRow $kind="loss"><Swatch $kind="loss" />Perdenti: 42</LegendRow>
              </div>
              <div>
                <LegendRow $kind="win"><Swatch $kind="win" /><div>Guadagno totale:<br />$12.925,80</div></LegendRow>
                <LegendRow $kind="loss" $apart><Swatch $kind="loss" /><div>Perdita totale:<br />-$5.038,80</div></LegendRow>
              </div>
            </Legends>
          </Half>
          <Half>
            <Heading as="h3" $wide>Guadagno medio: <Tone>$63,10 / trade</Tone></Heading>
            <Extreme><Small>Guadagno del miglior trade</Small><Amount>$745,10</Amount></Extreme>
            <Diagram>
              <Average><Small>Media trade<br />vincenti</Small><Amount>$155,73</Amount></Average>
              <TradeBars />
              <Average $loss><Small>Media trades<br />perdenti</Small><Amount>-$119,97</Amount></Average>
            </Diagram>
            <Extreme $loss><Small>Perdita del peggior trade</Small><Amount>-$535,70</Amount></Extreme>
          </Half>
        </Performance>
        <Rule />
        <Extremes>
          <Swing>
            <SwingIcon />
            <div>Max drawdown:<br /><Tone $loss>$718,90</Tone><Small>Max trade perdenti consecutivi: &nbsp;4</Small></div>
          </Swing>
          <Swing>
            <SwingIcon up />
            <div>Max runup:<br /><Tone>$8.237,20</Tone><Small>Max trade vincenti consecutivi: 8</Small></div>
          </Swing>
        </Extremes>
        <Rule />
        <Activity>
          <Market>
            <RingTitle $plain $wide>Tempo nel<br />mercato</RingTitle>
            <Ring id="time" share={99.4} text="99,68%" blue />
            <Rule $short />
            <RingTitle $plain>Media ordini<br />eseguiti:</RingTitle>
            <Orders>
              <OrdersIcon />
              <OrdersCard><Amount>0,27</Amount><Small>giornalieri</Small></OrdersCard>
            </Orders>
          </Market>
          <Gross>
            <GrossHead>
              <label htmlFor="period">Risultati lordi</label>
              <Select id="period" large width="111px" options={['Trimestrale', 'Mensile', 'Annuale']} />
            </GrossHead>
            <QuarterChart />
          </Gross>
        </Activity>
      </TabPanel>
      <Status>Le statistiche di cui sopra si riferiscono ai dati del passato. I rendimenti passati non sono indicativi di risultati futuri.</Status>
    </Report>
  );
};

/* ---------- chart window ---------- */

const Chart = styled.section`
  display: flex;
  flex-direction: column;
  min-width: 0;
  border: solid #5b94f0;
  border-width: 0 4px 3px;
  box-shadow: inset 0 1px #3465c4;
  background: #fff;
`;

const ChartTitle = styled.header`
  display: flex;
  align-items: center;
  gap: 3px;
  height: 25px;
  padding: 0 3px 0 0;
  border-top: 1px solid #3465c4;
  border-bottom: 1px solid #3465c4;
  background: linear-gradient(#7ab0ff, #5a93ee);
  color: #fff;
  font-weight: 700;
`;

const InfoBadge = styled.span`
  width: 11px;
  margin: 0 6px 0 9px;
  background: #eee;
  color: #555;
  text-align: center;
  line-height: 11px;
  font-family: "Liberation Serif", serif;
`;

const Quote = styled.span`
  padding: 0 1px;
  border: 1px solid #e8c8c8;
  background: linear-gradient(#d83030, #a00808);
`;

const InfoBar = styled.div`
  display: grid;
  grid-template-columns: 241fr 198fr 219fr 219fr 241fr;
  align-items: center;
  height: 22px;
  padding-left: 122px;
  border-bottom: 1px solid ${LINE};
  background: #9ab8c4;
`;

const InfoItem = styled.div`
  display: flex;
  align-items: center;
  gap: ${(p) => p.$gap || 4}px;
  white-space: pre;
`;

const Toolbar = styled.div`
  display: grid;
  grid-template-columns: 1fr 348px;
  height: 46px;
  background: linear-gradient(#9ab8c4, #fff);
`;

const ToolGroup = styled.div`
  display: grid;
  grid-template-columns: 270fr 278fr 198fr;
  align-items: center;
  padding-left: 146px;
`;

const Split = styled.div`
  display: flex;
  width: 50px;
  height: 28px;
  border: 1px solid ${LINE};
  border-radius: 3px;
  background: linear-gradient(#fff, #eee);
  button:last-child { flex: 1; border-left: 1px solid ${LINE}; }
`;

const OrderPanel = styled.form`
  display: grid;
  grid-template-columns: 9px 19px 138px 46px 56px 56px;
  grid-template-rows: 15px 28px;
  column-gap: 4px;
  align-items: start;
  justify-content: space-between;
  padding-right: 4px;
  background: #fff;
  label, span { text-align: center; line-height: 16px; }
`;

const Collapse = styled.button`
  grid-row: 1 / 3;
  width: 9px;
  height: 46px;
  padding: 0;
  border: 0;
  background: none;
`;

const WrenchButton = styled.button`
  grid-row: 2;
  grid-column: 2;
  display: grid;
  place-items: center;
  height: 20px;
  padding: 0;
  border: 1px solid ${LINE};
  border-radius: 3px;
  background: #eee;
`;

const Quantity = styled.input`
  width: 100%;
  height: 22px;
  padding: 0 3px;
  border: 1px solid ${LINE};
  border-radius: 3px;
  text-align: right;
`;

const Deal = styled.button`
  display: flex;
  align-items: flex-end;
  justify-content: center;
  height: 28px;
  padding: 0 0 3px;
  border: 1px solid ${(p) => (p.$buy ? '#159015' : '#b83030')};
  border-radius: 3px;
  background: ${(p) => (p.$buy ? 'linear-gradient(#3cc83c, #20ac20)' : 'linear-gradient(#f05c5c, #d84040)')};
  color: #fff;
  big { font-size: 19px; line-height: 20px; }
  sup { align-self: flex-start; padding-top: 3px; font-size: 11px; line-height: 12px; }
`;

const Frame = styled.div`
  display: grid;
  grid-template-columns: minmax(0, 1fr) 47px;
  grid-template-rows: minmax(0, 1fr);
  flex: ${(p) => (p.$grow ? '1 0 500px' : 'none')};
  height: ${(p) => p.$height || 'auto'};
  margin-bottom: ${(p) => (p.$grow ? 0 : 2)}px;
`;

const Plot = styled.div`
  position: relative;
  min-width: 0;
  min-height: 0;
  border: 1px solid ${LINE};
  border-left: 0;
  background: ${(p) => p.$fill};
`;

const PlotSvg = styled.svg`
  width: 100%;
  height: 100%;
`;

const PlotTitle = styled.div`
  position: absolute;
  z-index: 1;
  left: 0;
  top: 0;
  display: flex;
  align-items: center;
  gap: 3px;
  height: 17px;
  padding: 0 2px 0 3px;
  border: solid ${LINE};
  border-width: 0 1px 1px 0;
  background: linear-gradient(#c6e6f3, #9fbfcc);
`;

const AxisSvg = styled.svg`
  overflow: visible;
`;

const TimeAxis = styled.div`
  height: 21px;
  padding-right: 47px;
  border-bottom: 1px solid ${LINE};
`;

const BottomBar = styled.footer`
  display: flex;
  align-items: center;
  height: 30px;
  padding: 0 4px 0 1px;
  border-top: 1px solid #d8eef6;
  background: linear-gradient(#b2d0dc, #9ab8c4);
`;

const BarIcons = styled.div`
  display: flex;
  align-items: center;
  gap: ${(p) => p.$gap}px;
  margin: ${(p) => (p.$end ? '0 0 0 8px' : '0 8px 0 0')};
`;

const Share = styled(IconButton)`
  width: 21px;
  height: 22px;
  border: 1px solid #1673c0;
  border-radius: 3px;
  background: linear-gradient(#2c9ae8, #2388d8);
`;

const ScrollButton = styled.button`
  display: grid;
  place-items: center;
  width: 15px;
  height: 16px;
  padding: 0;
  border: 1px solid ${LINE};
  border-radius: 3px;
  background: linear-gradient(#c8e6f2, #a5c5d2);
`;

const ScrollTrack = styled.div`
  flex: 1;
  height: 16px;
  border: solid ${LINE};
  border-width: 1px 0;
  background: #9ab8c4;
`;

const Axis = ({ marks, badges = [] }) => (
  <AxisSvg width="47" height="100%">
    {marks.map(([y, label, bold]) => (
      <g key={label}>
        <path d={`M0 ${y + 0.5}h4`} stroke="#6f8896" />
        <text x="6" y={y + 4} fontSize={bold ? 12 : 11} fontWeight={bold ? 700 : 400}>{label}</text>
      </g>
    ))}
    {badges.map(([y, label, width, fill, color]) => (
      <g key={label}>
        <rect x="4.500" y={y + 0.5} width={width} height="14" fill={fill} stroke="#6f8896" />
        <text x="6" y={y + 12} fontSize="11" fill={color}>{label}</text>
      </g>
    ))}
  </AxisSvg>
);

const EquityPlot = () => {
  const line = EQUITY.map((p) => p.join(',')).join(' ');
  const up = [];
  const down = [];
  EQUITY.slice(1).forEach(([x, y], i) => {
    const [px, py] = EQUITY[i];
    (y < py - 1 ? up : down).push(`M${px} ${py}L${x} ${y}`);
  });
  return (
    <PlotSvg viewBox="0 0 1192 225" preserveAspectRatio="none">
      <clipPath id="aboveZero"><rect width="1192" height="207" /></clipPath>
      <clipPath id="belowZero"><rect y="207" width="1192" height="18" /></clipPath>
      <polygon points={`3,207 ${line} 1155,207`} fill="#adedc1" clipPath="url(#aboveZero)" />
      <polygon points={`3,207 ${line} 1155,207`} fill="#ffb8b8" clipPath="url(#belowZero)" />
      <g fill="none" strokeWidth="2">
        <path d={down.join('')} stroke="#ff3838" strokeLinecap="round" />
        <path d={down.join('')} stroke="#5a9c3c" strokeDasharray="2 6" />
        <path d={up.join('')} stroke="#08cc38" strokeLinecap="round" />
        <path d={up.join('')} stroke="#c0502c" strokeDasharray="2 9" />
      </g>
      <path d="M3 0v225" stroke="#000" strokeWidth="2" />
      <path d="M0 207.500h1192" stroke="#2222cc" />
      <path d="M84 0v225M0 223h1192" stroke="#ff9494" strokeWidth="2" />
    </PlotSvg>
  );
};

const PositionPlot = () => (
  <PlotSvg viewBox="0 0 1192 109" preserveAspectRatio="none" shapeRendering="crispEdges">
    {LONGS.map(([a, b]) => <rect key={a} x={a} y="5" width={Math.max(1, b - a)} height="50" fill="#00cc33" />)}
    {SHORTS.map(([a, b]) => <rect key={a} x={a} y="56" width={Math.max(1, b - a)} height="49" fill="#ff3333" />)}
    <path d="M57 0v109" stroke="#ff9494" strokeWidth="2" opacity="0.700" />
    <path d="M0 55.500h1192" stroke="#2222cc" />
  </PlotSvg>
);

const CROSS = 'M-5-3l2-2h1l2 2 2-2h1l2 2v1l-2 2 2 2v1l-2 2h-1l-2-2-2 2h-1l-2-2v-1l2-2-2-2z';

const Tag = ({ tag: [a, b, name], sell }) => (
  <g>
    <path
      d={sell ? `M${a}.500 0v13q0 3 3 3H${b - 3}q3 0 3-3V0` : `M${a}.500 498v-14q0-3 3-3H${b - 3}q3 0 3 3v14`}
      fill={sell ? '#f5b8c2' : '#adecc6'} stroke={sell ? '#ff9298' : '#0cc23c'}
    />
    {name && <text x={b - 2} y={sell ? 12 : 494} textAnchor="end" fontSize="11">{name}</text>}
  </g>
);

const PricePlot = () => (
  <PlotSvg viewBox="0 0 1192 498" preserveAspectRatio="none">
    <path d={BARS.up} stroke="#3fd04f" />
    <path d={BARS.down} stroke="#dc5c60" />
    <path d="M145.500 23v60M406.500 320v56" stroke="#3fd04f" />
    <path d="M146.500 41v230M239.500 340v136" stroke="#dc5c60" />
    <path d="M84 0v498" stroke="#ff9494" strokeWidth="2" />
    {SELL_TAGS.map((t) => <Tag key={t[0]} tag={t} sell />)}
    <text x="128" y="12" fontSize="11">niAnni: Maxi 1,33822 Min 1,20151</text>
    <text x="135" y="12" fontSize="11">ini ordini i 1,3 dini 2 dini n ni</text>
    {BUY_TAGS.map((t) => <Tag key={t[0]} tag={t} />)}
    <text x="2" y="494" fontSize="11" fontWeight="700">,44115</text>
    <text x="3" y="496" fontSize="11">© IT-Finance.com&nbsp; <tspan fontStyle="italic">Dati indicativi</tspan></text>
    {BUYS.map(([x, y]) => (
      <g key={`${x}-${y}`} transform={`translate(${x} ${y})`} fill="#10cc34" stroke="#007a1c" strokeLinejoin="round">
        <path d="M-2 5v-5h-3l5-6 5 6h-3v5z" />
        <path d={CROSS} transform="translate(0 19)" />
      </g>
    ))}
    {SELLS.map(([x, y]) => (
      <g key={`${x}-${y}`} transform={`translate(${x} ${y})`} fill="#ff3a3a" stroke="#b00000" strokeLinejoin="round">
        <path d="M-2 13v6h-3l5 6 5-6h-3v-6z" />
        <path d={CROSS} />
      </g>
    ))}
  </PlotSvg>
);

const ChartWindow = () => {
  const [quantity, setQuantity] = useState('1');
  return (
    <Chart>
      <ChartTitle>
        <WhiteCandlesIcon />
        <svg width="8" height="5" viewBox="0 0 8 5"><path d="M0 0h8L4 5z" fill="#fff" /></svg>
        <span>GBPUSD</span>
        <InfoBadge>i</InfoBadge>
        <Quote>1,21375 (-0,23%)</Quote>
        <span>20.02.26&nbsp; GBP/USD Mini</span>
        <WindowControls><KeyboardIcon /><Controls color="#fff" /></WindowControls>
      </ChartTitle>
      <InfoBar>
        <InfoItem $gap={3}>
          {'Posizione: '}<b>0</b>
          <svg width="12" height="12" viewBox="-6 -6 12 12"><path d="M-6-6h12v12h-12z" fill="#b9c8cf" /><path d={CROSS} fill="#e48c92" /></svg>
          {' '}<b>/ 0</b><GearsIcon />
        </InfoItem>
        <InfoItem>Durata posiz.:  -</InfoItem>
        <InfoItem>Guadagno latente:  -</InfoItem>
        <InfoItem>Guadagno Giorno:  -</InfoItem>
        <InfoItem>I trade di oggi: <b><Tone>0</Tone> / 0 / <Tone $loss>0</Tone></b></InfoItem>
      </InfoBar>
      <Toolbar>
        <ToolGroup>
          <Select label="Intervallo" width="79px" options={['2 Anni', '1 Anno', '5 Anni']} />
          <Select label="Frequenza" width="87px" options={['Giornaliero', 'Settimanale']} />
          <Split>
            <IconButton aria-label="Indicatori"><IndicatorIcon /></IconButton>
            <IconButton aria-label="Altri indicatori"><svg width="8" height="5" viewBox="0 0 8 5"><path d="M0 0h8L4 5z" /></svg></IconButton>
          </Split>
        </ToolGroup>
        <OrderPanel onSubmit={(e) => e.preventDefault()}>
          <Collapse type="button" aria-label="Comprimi">
            <svg width="9" height="46" viewBox="0 0 9 46">
              <path d="M0 0h8L1 7v32l7 7H0z" fill="#a9c4cf" />
              <path d="M8 0L0.500 7v32L8 46" fill="#f2f8fa" stroke="#6f8896" />
              <path d="M3 20l5 4-5 4z" />
            </svg>
          </Collapse>
          <i /><i />
          <label htmlFor="qty">Qtà</label>
          <span>Vendi</span>
          <span>Compra</span>
          <WrenchButton type="button" aria-label="Opzioni ordine"><WrenchIcon size={15} /></WrenchButton>
          <Select label="Tipo di ordine" width="138px" options={['Al Mercato', 'Limite', 'Stop']} />
          <Quantity id="qty" value={quantity} onChange={(e) => setQuantity(e.target.value)} />
          <Deal type="button">1,21<big>36</big><sup>6</sup></Deal>
          <Deal type="button" $buy>1,21<big>38</big><sup>3</sup></Deal>
        </OrderPanel>
      </Toolbar>
      <Frame $height="227px">
        <Plot $fill="linear-gradient(#fff, #f4f7ff)">
          <PlotTitle>Curva guadagni e perdite: Il Mio Sistema(330) (17 0,58)<WrenchIcon /><PaneIcon /><CloseIcon /></PlotTitle>
          <EquityPlot />
        </Plot>
        <Axis
          marks={[[34, '17.000'], [59, '16.000'], [84, '15.000', 1], [108, '14.000'], [133, '13.000'], [158, '12.000'], [183, '11.000'], [207, '10.000', 1]]}
          badges={[[4, '17.903', 37, '#d5e4ee', '#08c030'], [210, '9.340', 30, '#fbf51c', '#000']]}
        />
      </Frame>
      <Frame $height="111px">
        <Plot $fill="linear-gradient(#f5f8ff, #f0f4fe)">
          <PlotTitle>ProBacktest - Posizioni: Il Mio Sistema(330) (17 0,58)<PaneIcon /><CloseIcon /></PlotTitle>
          <PositionPlot />
        </Plot>
        <Axis
          marks={[[6, '1'], [31, '0,5'], [55, '0', 1], [80, '-0,5']]}
          badges={[[94, '-1', 13, '#d5e4ee', '#e83030']]}
        />
      </Frame>
      <Frame $grow>
        <Plot $fill="linear-gradient(#f0f4ff, #d9e4ff)">
          <PlotTitle>Prezzo <WrenchIcon /><PaneIcon /><CloseIcon /><OrderIcon /><OrderIcon up /></PlotTitle>
          <PricePlot />
        </Plot>
        <Axis
          marks={[[26, '1,5', 1], [97, '1,45'], [167, '1,4'], [237, '1,35'], [308, '1,3'], [378, '1,25'], [448, '1,2']]}
          badges={[[421, '1,21375', 42, '#fcd40c', '#000']]}
        />
      </Frame>
      <TimeAxis>
        <PlotSvg viewBox="0 0 1192 20" preserveAspectRatio="none">
          {MONTHS.map(([x, label]) => (
            <g key={x}>
              <path d={`M${x + 0.5} 0v4`} stroke="#6f8896" />
              <text x={x} y="15" textAnchor="middle" fontSize={label > '2' && label < '3' ? 12 : 11} fontWeight={label > '2' && label < '3' ? 700 : 400}>{label}</text>
            </g>
          ))}
          <path d="M58.500 0v4" stroke="#000" />
          <text x="102" y="15" fontSize="11">g</text>
          <rect x="15.500" y="4.500" width="86" height="14" fill="#fbf51c" stroke="#6f8896" />
          <text x="58" y="15" textAnchor="middle" fontSize="11">mer 16-mar-2016</text>
        </PlotSvg>
      </TimeAxis>
      <BottomBar>
        <BarIcons $gap={5}>
          <Share aria-label="Condividi"><ShareIcon /></Share>
          <IconButton aria-label="Collega"><ChainIcon /></IconButton>
        </BarIcons>
        <BarIcons $gap={12}>
          <IconButton aria-label="Note"><NotesIcon /></IconButton>
          <IconButton aria-label="Book"><DepthIcon /></IconButton>
        </BarIcons>
        <ScrollButton aria-label="Scorri a sinistra"><svg width="4" height="8" viewBox="0 0 4 8"><path d="M4 0v8L0 4z" /></svg></ScrollButton>
        <ScrollTrack />
        <ScrollButton aria-label="Scorri a destra"><svg width="4" height="8" viewBox="0 0 4 8"><path d="M0 0v8l4-4z" /></svg></ScrollButton>
        <BarIcons $gap={8} $end>
          <IconButton aria-label="Strumenti"><ChartToolsIcon /></IconButton>
          <IconButton aria-label="Adatta"><MagnifierIcon /></IconButton>
          <IconButton aria-label="Riduci zoom"><MagnifierIcon sign="-" /></IconButton>
          <IconButton aria-label="Aumenta zoom"><MagnifierIcon sign="+" /></IconButton>
        </BarIcons>
      </BottomBar>
    </Chart>
  );
};

const App = () => (
  <Desktop>
    <GlobalStyle />
    <Windows>
      <ReportWindow />
      <ChartWindow />
    </Windows>
    <BackWindow />
  </Desktop>
);

export default App;
